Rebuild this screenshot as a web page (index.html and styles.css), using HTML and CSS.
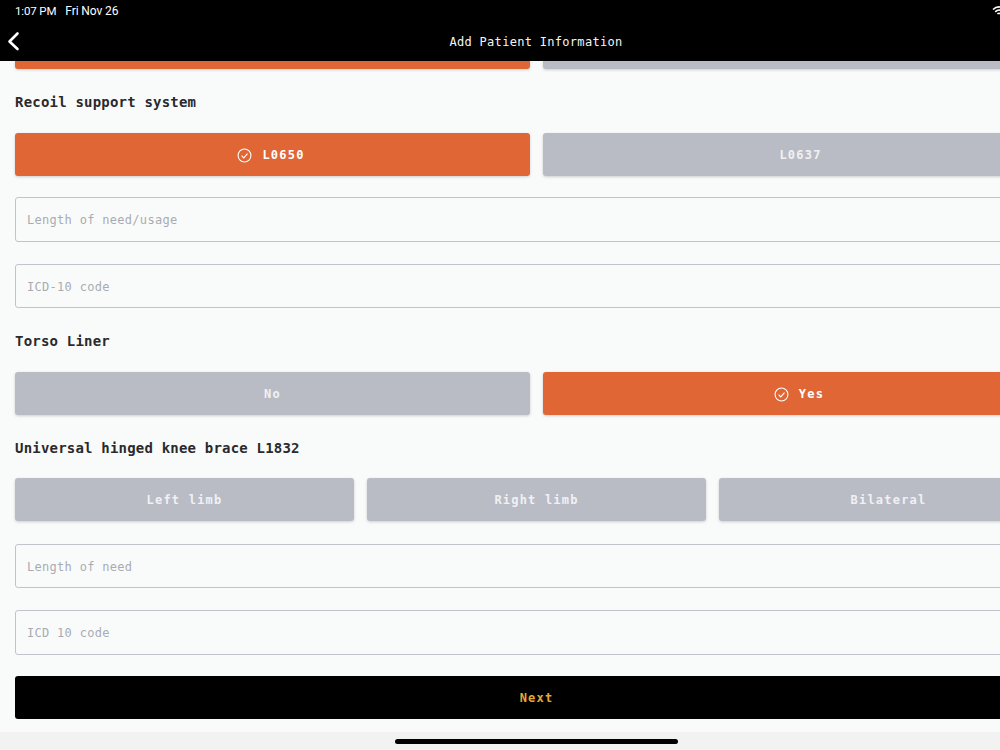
FILE: index.html
```html
<!DOCTYPE html>
<html lang="en">
<head>
<meta charset="utf-8">
<title>Add Patient Information</title>
<link rel="stylesheet" href="styles.css">
</head>
<body>
<div class="app">
  <header class="topbar">
    <div class="status">
      <span class="time">1:07 PM</span><span class="date">Fri Nov 26</span>
      <svg class="wifi" width="14" height="12" viewBox="0 0 14 12" fill="none" stroke="#fff" stroke-width="1.600"><path d="M1 4.500C4.500 1 9.500 1 13 4.500"/><path d="M3.200 6.800C5.500 4.600 8.500 4.600 10.800 6.800"/><path d="M5.400 9C6.300 8.200 7.700 8.200 8.600 9"/></svg>
    </div>
    <div class="nav">
      <svg class="back" width="14" height="20" viewBox="0 0 14 20" fill="none" stroke="#fff" stroke-width="2.600" stroke-linecap="round" stroke-linejoin="round"><path d="M10.500 2.500L2.500 10.500l8 7.500"/></svg>
      <h1 class="title">Add Patient Information</h1>
    </div>
  </header>
  <main class="content">
    <div class="row two stub">
      <div class="btn on"></div>
      <div class="btn"></div>
    </div>
    <h2 class="label">Recoil support system</h2>
    <div class="row two">
      <button class="btn on"><svg class="check" viewBox="0 0 14 14" fill="none" stroke="#fff" stroke-width="1"><circle cx="7" cy="7" r="6"/><path d="M4.300 7.200l2 2 3.500-4"/></svg>L0650</button>
      <button class="btn">L0637</button>
    </div>
    <div class="field">Length of need/usage</div>
    <div class="field">ICD-10 code</div>
    <h2 class="label">Torso Liner</h2>
    <div class="row two">
      <button class="btn">No</button>
      <button class="btn on"><svg class="check" viewBox="0 0 14 14" fill="none" stroke="#fff" stroke-width="1"><circle cx="7" cy="7" r="6"/><path d="M4.300 7.200l2 2 3.500-4"/></svg>Yes</button>
    </div>
    <h2 class="label knee">Universal hinged knee brace L1832</h2>
    <div class="row three">
      <button class="btn">Left limb</button>
      <button class="btn">Right limb</button>
      <button class="btn">Bilateral</button>
    </div>
    <div class="field after-three">Length of need</div>
    <div class="field">ICD 10 code</div>
    <button class="next">Next</button>
  </main>
  <div class="homebar"><span class="indicator"></span></div>
</div>
</body>
</html>
```
FILE: styles.css
```css
* { box-sizing: border-box; }
html, body { margin: 0; height: 750px; overflow: hidden; background: #f9fbfa; }
.app {
  width: 1072px; height: 750px; display: flex; flex-direction: column;
  font-family: "DejaVu Sans Mono", "Liberation Mono", monospace;
  background: #f9fbfa;
}
.topbar { height: 61px; flex: none; background: #000; color: #fff; }
.status {
  height: 21px; padding: 1px 0 0 15px; display: flex; align-items: center;
  font: 11.500px/14px Roboto, sans-serif; position: relative;
}
.time { letter-spacing: -.15px; }
.date { margin-left: 9px; font-size: 12px; letter-spacing: -.1px; }
.wifi { position: absolute; left: 992px; top: 5px; }
.nav { height: 40px; display: flex; align-items: center; position: relative; }
.back { position: absolute; left: 7px; top: 10px; }
.title {
  margin: 2px auto 0; font-size: 12px; font-weight: 400; letter-spacing: .3px;
  color: #f5f5f5;
}
.content { flex: 1; min-height: 0; padding: 0 14px 0 15px; overflow: hidden; }
.row { display: grid; gap: 13px; }
.two { grid-template-columns: 1fr 1fr; }
.three { grid-template-columns: 1fr 1fr 1fr; }
.btn {
  height: 43px; border: 0; padding: 1px 0 0; border-radius: 3px; background: #babcc5; color: #f0f1f4;
  font: 700 12px "DejaVu Sans Mono", monospace; letter-spacing: 1.200px;
  display: flex; align-items: center; justify-content: center;
  box-shadow: 0 1px 3px rgba(0,0,0,.18);
}
.btn.on { background: #e06636; color: #fff; padding-right: 3px; }
.stub { height: 8px; }
.stub .btn { height: 8px; border-radius: 0 0 3px 3px; }
.check { width: 15px; height: 15px; margin-right: 10px; }
.label {
  margin: 25px 0 23px; font-size: 14px; line-height: 16px; font-weight: 700;
  color: #2a2a2c; letter-spacing: .2px;
}
.label.knee { margin-bottom: 22px; }
.field {
  height: 44.500px; margin-top: 22px; padding: 2px 11px 0; display: flex; align-items: center;
  border: 1px solid #c2c3cc; border-radius: 3px; background: #f9fbfa;
  color: #a9abb3; font-size: 12px; letter-spacing: .3px;
}
.row + .field { margin-top: 21px; }
.field.after-three { margin-top: 22.500px; }
.next {
  display: block; width: 100%; height: 43px; margin-top: 21.500px; padding: 1px 0 0; border: 0; border-radius: 3px;
  background: #000; color: #e8a735;
  font: 700 12px "DejaVu Sans Mono", monospace; letter-spacing: 1.200px;
}
.homebar {
  height: 18px; flex: none; background: #f2f2f2; display: flex; justify-content: center;
  padding-top: 7px;
}
.indicator { width: 283px; height: 5px; border-radius: 3px; background: #000; }
```
